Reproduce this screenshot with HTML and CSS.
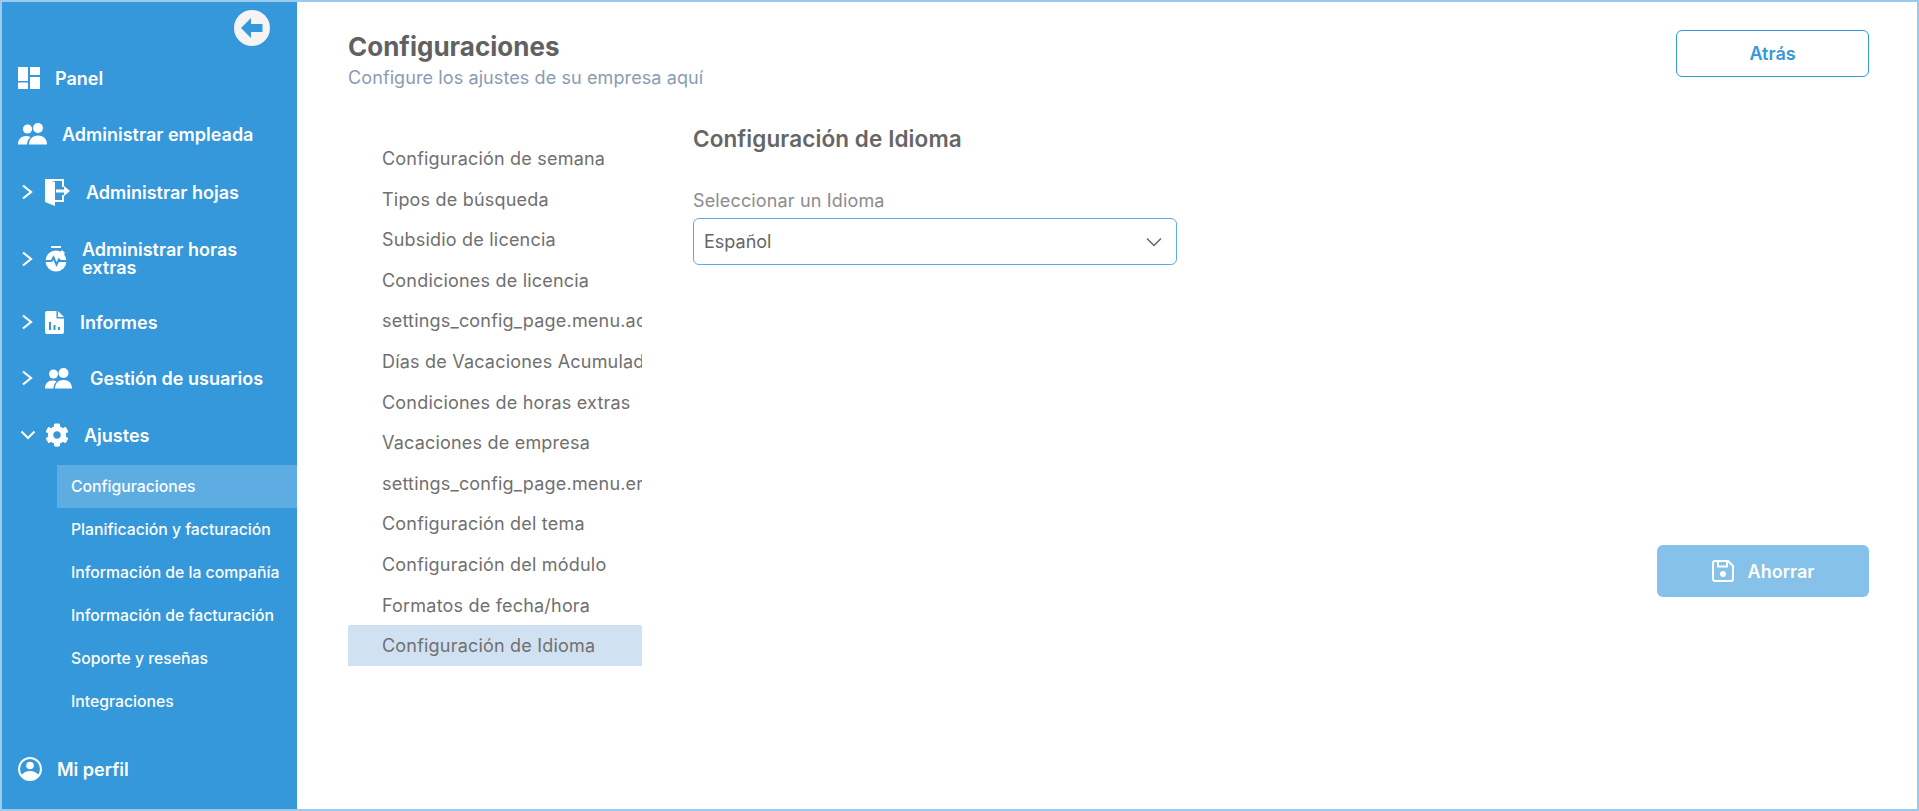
FILE: index.html
```html
<!DOCTYPE html>
<html lang="es">

<head>
    <meta name="viewport" content="width=device-width,initial-scale=1.0">
    <title>Configuraciones</title>
    <link rel="stylesheet" href="styles.css">
</head>

<body>
    <div class="frame">
        <aside class="sidebar">
            <div class="sidebarTop">
                <button class="collapseBtn" aria-label="Cerrar">
                    <svg width="22" height="20" viewBox="0 0 22 20"><path d="M0 10 10 0v6h11.500v8H10v6z" fill="#3498db"/></svg>
                </button>
            </div>

            <nav class="nav">
                <a class="navItem panel">
                    <svg class="icon" width="22" height="22" viewBox="0 0 22 22"><path d="M0 0h10v14H0zM12 0h10v8H12zM0 15.500h10V22H0zM12 10h10v12H12z" fill="#fff"/></svg>
                    <span>Panel</span>
                </a>
                <a class="navItem employees">
                    <svg class="icon" width="29" height="22" viewBox="0 0 29 22"><circle cx="9.500" cy="6" r="4.600" fill="#fff"/><circle cx="20" cy="5" r="5" fill="#fff"/><path d="M0 21.500c0-5 3-8.500 8-8.500 1.800 0 3.300.4 4.500 1.200-2.200 1.700-3.300 4.200-3.300 7.300z" fill="#fff"/><path d="M11 21.500c0-5.500 3.500-9 9-9s9 3.500 9 9z" fill="#fff"/></svg>
                    <span>Administrar empleada</span>
                </a>
                <a class="navItem leaves">
                    <svg class="chev" width="12" height="16" viewBox="0 0 12 16"><path d="M1 1.500l8 6.500-8 6.500" fill="none" stroke="#fff" stroke-width="2.200"/></svg>
                    <svg class="icon" width="26" height="27" viewBox="0 0 26 27"><path d="M0 0l10 3v24L0 23z" fill="#fff"/><path d="M0 0h19v8h-2V2H0zM17 16h2v7h-9v-2h7z" fill="#fff"/><path d="M11 10.500h8V7l6 5-6 5v-3.500h-8z" fill="#fff"/></svg>
                    <span>Administrar hojas</span>
                </a>
                <a class="navItem overtime">
                    <svg class="chev" width="12" height="16" viewBox="0 0 12 16"><path d="M1 1.500l8 6.500-8 6.500" fill="none" stroke="#fff" stroke-width="2.200"/></svg>
                    <svg class="icon" width="22" height="26" viewBox="0 0 22 26"><path d="M6 0h10v2H6z" fill="#fff"/><circle cx="11" cy="15" r="10.500" fill="#fff"/><path d="M17 4l3 3-1.500 1.500-3-3z" fill="#fff"/><path d="M0 15h6.500l2-3.500 3 7 2.500-5 1.500 1.500H22" fill="none" stroke="#3498db" stroke-width="2"/></svg>
                    <span class="twoLines">Administrar horas extras</span>
                </a>
                <a class="navItem reports">
                    <svg class="chev" width="12" height="16" viewBox="0 0 12 16"><path d="M1 1.500l8 6.500-8 6.500" fill="none" stroke="#fff" stroke-width="2.200"/></svg>
                    <svg class="icon" width="19" height="23" viewBox="0 0 19 23"><path d="M2 0h9.500v7.500H19V21a2 2 0 0 1-2 2H2a2 2 0 0 1-2-2V2a2 2 0 0 1 2-2zM13 0l6 6h-6z" fill="#fff"/><path d="M4 11h2v8H4zM8.500 14h2v5h-2zM13 16h2v3h-2z" fill="#3498db"/></svg>
                    <span>Informes</span>
                </a>
                <a class="navItem users">
                    <svg class="chev" width="12" height="16" viewBox="0 0 12 16"><path d="M1 1.500l8 6.500-8 6.500" fill="none" stroke="#fff" stroke-width="2.200"/></svg>
                    <svg class="icon" width="27" height="21" viewBox="0 0 27 21"><circle cx="8.500" cy="6" r="4.500" fill="#fff"/><circle cx="18.500" cy="5" r="5" fill="#fff"/><path d="M0 20.500c0-5 2.800-8 7.500-8 1.600 0 3 .3 4 1-2 1.700-3 4-3 7z" fill="#fff"/><path d="M10 20.500c0-5.200 3.300-8.500 8.500-8.500s8.500 3.300 8.500 8.500z" fill="#fff"/></svg>
                    <span>Gestión de usuarios</span>
                </a>
                <a class="navItem settings">
                    <svg class="chev open" width="16" height="12" viewBox="0 0 16 12"><path d="M1.500 2.500 8 9l6.500-6.500" fill="none" stroke="#fff" stroke-width="2"/></svg>
                    <svg class="icon" width="24" height="24" viewBox="0 0 512 512"><path fill="#fff" d="M487.400 315.700l-42.600-24.600c4.300-23.200 4.300-47 0-70.200l42.600-24.600c4.900-2.800 7.100-8.600 5.500-14-11.100-35.600-30-67.800-54.700-94.600-3.800-4.100-10-5.100-14.800-2.300L380.800 110c-17.900-15.400-38.500-27.300-60.800-35.100V25.800c0-5.600-3.900-10.500-9.400-11.700-36.700-8.200-74.300-7.800-109.200 0-5.500 1.200-9.400 6.100-9.400 11.700V75c-22.200 7.900-42.800 19.800-60.800 35.100L88.700 85.500c-4.900-2.800-11-1.900-14.800 2.300-24.700 26.700-43.600 58.900-54.700 94.600-1.700 5.400.6 11.200 5.500 14L67.300 221c-4.300 23.200-4.300 47 0 70.200l-42.600 24.600c-4.900 2.800-7.100 8.600-5.500 14 11.100 35.600 30 67.800 54.700 94.600 3.800 4.100 10 5.100 14.800 2.300l42.600-24.600c17.900 15.400 38.500 27.300 60.800 35.100v49.200c0 5.600 3.900 10.500 9.400 11.700 36.700 8.200 74.300 7.800 109.200 0 5.500-1.200 9.400-6.100 9.400-11.700v-49.200c22.200-7.900 42.800-19.800 60.800-35.100l42.600 24.600c4.900 2.800 11 1.900 14.800-2.300 24.700-26.700 43.600-58.900 54.700-94.600 1.500-5.500-.7-11.300-5.600-14.100zM256 336c-44.100 0-80-35.900-80-80s35.900-80 80-80 80 35.900 80 80-35.900 80-80 80z"/></svg>
                    <span>Ajustes</span>
                </a>
                <ul class="subNav">
                    <li class="active">Configuraciones</li>
                    <li>Planificación y facturación</li>
                    <li>Información de la compañía</li>
                    <li>Información de facturación</li>
                    <li>Soporte y reseñas</li>
                    <li>Integraciones</li>
                </ul>
                <a class="navItem profile">
                    <svg class="icon" width="24" height="24" viewBox="0 0 24 24"><circle cx="12" cy="12" r="11" fill="none" stroke="#fff" stroke-width="2"/><circle cx="12" cy="8.500" r="3.800" fill="#fff"/><path d="M3.500 18.500c1.500-3 4.500-4.500 8.500-4.500s7 1.500 8.500 4.500C18.500 21.500 15.500 23 12 23s-6.500-1.500-8.500-4.500z" fill="#fff"/></svg>
                    <span>Mi perfil</span>
                </a>
            </nav>
        </aside>

        <main class="main">
            <header class="pageHeader">
                <div>
                    <h1>Configuraciones</h1>
                    <p>Configure los ajustes de su empresa aquí</p>
                </div>
                <button class="backBtn">Atrás</button>
            </header>

            <div class="content">
                <ul class="settingsMenu">
                    <li>Configuración de semana</li>
                    <li>Tipos de búsqueda</li>
                    <li>Subsidio de licencia</li>
                    <li>Condiciones de licencia</li>
                    <li>settings_config_page.menu.ac</li>
                    <li>Días de Vacaciones Acumulad</li>
                    <li>Condiciones de horas extras</li>
                    <li>Vacaciones de empresa</li>
                    <li>settings_config_page.menu.er</li>
                    <li>Configuración del tema</li>
                    <li>Configuración del módulo</li>
                    <li>Formatos de fecha/hora</li>
                    <li class="active">Configuración de Idioma</li>
                </ul>

                <section class="panelForm">
                    <h2>Configuración de Idioma</h2>
                    <label class="fieldLabel">Seleccionar un Idioma</label>
                    <div class="selectBox">
                        <span>Español</span>
                        <svg width="16" height="10" viewBox="0 0 16 10"><path d="M1 1.500l7 7 7-7" fill="none" stroke="#6b6262" stroke-width="1.500"/></svg>
                    </div>
                    <div class="formActions">
                        <button class="saveBtn">
                            <svg width="22" height="22" viewBox="0 0 22 22"><path d="M3 1h13l5 5v13a2 2 0 0 1-2 2H3a2 2 0 0 1-2-2V3a2 2 0 0 1 2-2z" fill="none" stroke="#fff" stroke-width="2"/><path d="M6 1.500v5h9v-5" fill="none" stroke="#fff" stroke-width="2"/><circle cx="11" cy="14" r="3" fill="#fff"/></svg>
                            Ahorrar
                        </button>
                    </div>
                </section>
            </div>
        </main>
    </div>
</body>

</html>
```

FILE: styles.css
```css
* {
    box-sizing: border-box;
}

html,
body {
    height: 100%;
}

body {
    margin: 0;
    font-family: Inter, "Liberation Sans", sans-serif;
    background: #fff;
}

.frame {
    display: flex;
    height: 811px;
    border: 2px solid #9bcbec;
    overflow: hidden;
}

/* sidebar */
.sidebar {
    width: 295px;
    flex-shrink: 0;
    background: #3498db;
    color: #fff;
}

.sidebarTop {
    display: flex;
    justify-content: flex-end;
    padding: 8px 27px 0 0;
}

.collapseBtn {
    display: flex;
    align-items: center;
    justify-content: center;
    width: 36px;
    height: 36px;
    padding: 0;
    border: none;
    border-radius: 50%;
    background: #f4f4f4;
}

.nav {
    display: flex;
    flex-direction: column;
}

.navItem {
    display: flex;
    align-items: center;
    height: 24px;
    padding-left: 16px;
    font-size: 18px;
    font-weight: 600;
}

.chev {
    flex-shrink: 0;
    margin-left: 4px;
    margin-right: 11px;
}

.chev.open {
    margin-left: 2px;
    margin-right: 9px;
}

.icon {
    flex-shrink: 0;
}

.panel { margin-top: 20px; }
.panel span { margin-left: 15px; }
.employees { margin-top: 32px; }
.employees span { margin-left: 15px; }
.leaves { margin-top: 34px; }
.leaves span { margin-left: 15px; }
.overtime { margin-top: 43px; }
.overtime span { margin-left: 15px; }
.reports { margin-top: 39px; }
.reports span { margin-left: 16px; }
.users { margin-top: 32px; }
.users span { margin-left: 18px; }
.settings { margin-top: 33px; }
.settings span { margin-left: 15px; }
.profile { margin-top: 34px; }
.profile span { margin-left: 15px; }

.twoLines {
    max-width: 190px;
    line-height: 18px;
}

.subNav {
    list-style-type: none;
    margin: 18px 0 0 55px;
    padding: 0;
}

.subNav li {
    display: flex;
    align-items: center;
    height: 43px;
    padding-left: 14px;
    font-size: 15.750px;
    font-weight: 500;
}

.subNav li.active {
    background: #5dade2;
}

/* main */
.main {
    flex: 1;
    min-width: 0;
    padding: 28px 48px 0 51px;
}

.pageHeader {
    display: flex;
    justify-content: space-between;
    align-items: flex-start;
}

.pageHeader h1 {
    margin: 1px 0 0;
    font-size: 26px;
    line-height: 32px;
    font-weight: 700;
    color: #616161;
}

.pageHeader p {
    margin: 3px 0 0;
    font-size: 18px;
    line-height: 24px;
    letter-spacing: .1px;
    color: #8a9bb5;
}

.backBtn {
    width: 193px;
    height: 47px;
    border: 1.500px solid #3498db;
    border-radius: 6px;
    background: #fff;
    color: #3498db;
    font-family: inherit;
    font-size: 18px;
    font-weight: 600;
}

.content {
    display: flex;
    margin-top: 48px;
}

.settingsMenu {
    list-style-type: none;
    width: 294px;
    flex-shrink: 0;
    margin: 0;
    padding: 0;
}

.settingsMenu li {
    height: 40.600px;
    line-height: 42.600px;
    padding-left: 34px;
    font-size: 18px;
    letter-spacing: .2px;
    color: #707070;
    white-space: nowrap;
    overflow: hidden;
}

.settingsMenu li.active {
    background: #d0e1f1;
    border-radius: 2px 2px 0 0;
}

.panelForm {
    flex: 1;
    margin-left: 51px;
    margin-top: -14px;
}

.panelForm h2 {
    margin: 0;
    font-size: 22.500px;
    line-height: 30px;
    letter-spacing: .1px;
    font-weight: 600;
    color: #666;
}

.fieldLabel {
    display: block;
    margin-top: 36px;
    font-size: 18px;
    line-height: 22px;
    letter-spacing: .15px;
    color: #8c8c8c;
}

.selectBox {
    display: flex;
    align-items: center;
    justify-content: space-between;
    width: 484px;
    height: 47px;
    margin-top: 6px;
    padding: 0 14px 0 10px;
    border: 1px solid #5dade2;
    border-radius: 6px;
    font-size: 18px;
    color: #666;
}

.formActions {
    display: flex;
    justify-content: flex-end;
    margin-top: 280px;
}

.saveBtn {
    display: flex;
    align-items: center;
    justify-content: center;
    gap: 14px;
    width: 212px;
    height: 52px;
    border: none;
    border-radius: 6px;
    background: #85c1e9;
    color: #fff;
    font-family: inherit;
    font-size: 18px;
    font-weight: 600;
}
```
